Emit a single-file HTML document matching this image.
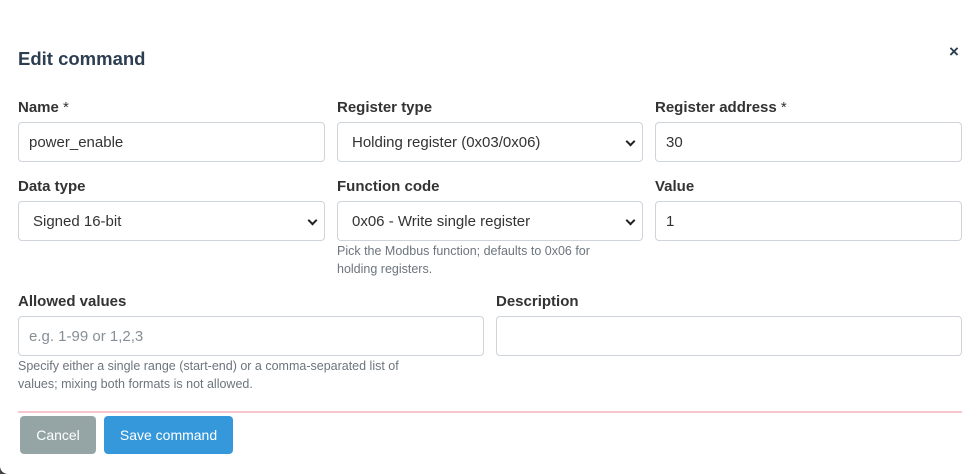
<!DOCTYPE html>
<html><head><style>
*{box-sizing:border-box;margin:0;padding:0}
html,body{width:980px;height:474px;background:#444;overflow:hidden}
body{font-family:"Liberation Sans",Arial,sans-serif}
.m{position:absolute;left:0;top:0;width:980px;height:474px;background:#fff;border-radius:0 0 0 8px}
.a{position:absolute}
h1{position:absolute;left:18px;top:48px;font-size:18.5px;font-weight:bold;color:#2c3e50}
.x{left:949px;top:42px;font-size:17px;color:#2c3e50;font-weight:bold}
.l{font-size:15px;font-weight:bold;color:#333}
.l span{font-weight:normal}
.i{border:1px solid #ced4da;border-radius:4px;height:40px;font-size:15px;color:#333;padding:0 10px;line-height:40px}
.s{padding-left:14px}
.s::after{content:"";position:absolute;right:8px;top:15px;width:5px;height:5px;border-right:2px solid #222;border-bottom:2px solid #222;transform:rotate(45deg)}
.h{font-size:12.5px;color:#6c757d;line-height:18px}
.b{top:416px;height:38px;border-radius:4px;color:#fff;font-size:14px;line-height:38px;text-align:center}
</style></head><body><div class="m">
<h1>Edit command</h1>
<div class="a x">×</div>
<div class="a l" style="left:18px;top:99px">Name <span>*</span></div>
<div class="a l" style="left:337px;top:99px">Register type</div>
<div class="a l" style="left:655px;top:99px">Register address <span>*</span></div>
<div class="a i" style="left:18px;top:122px;width:307px">power_enable</div>
<div class="a i s" style="left:337px;top:122px;width:306px">Holding register (0x03/0x06)</div>
<div class="a i" style="left:655px;top:122px;width:307px">30</div>
<div class="a l" style="left:18px;top:178px">Data type</div>
<div class="a l" style="left:337px;top:178px">Function code</div>
<div class="a l" style="left:655px;top:178px">Value</div>
<div class="a i s" style="left:18px;top:201px;width:307px">Signed 16-bit</div>
<div class="a i s" style="left:337px;top:201px;width:306px">0x06 - Write single register</div>
<div class="a i" style="left:655px;top:201px;width:307px">1</div>
<div class="a h" style="left:337px;top:242px;width:290px">Pick the Modbus function; defaults to 0x06 for holding registers.</div>
<div class="a l" style="left:18px;top:293px">Allowed values</div>
<div class="a l" style="left:496px;top:293px">Description</div>
<div class="a i" style="left:18px;top:316px;width:466px;color:#868e96">e.g. 1-99 or 1,2,3</div>
<div class="a i" style="left:496px;top:316px;width:466px"></div>
<div class="a h" style="left:18px;top:357px;width:412px">Specify either a single range (start-end) or a comma-separated list of values; mixing both formats is not allowed.</div>
<div class="a" style="left:18px;top:411px;width:944px;height:2px;background:#f5c6cb"></div>
<div class="a b" style="left:20px;width:76px;background:#95a5a6">Cancel</div>
<div class="a b" style="left:104px;width:129px;background:#3498db">Save command</div>
</div></body></html>
